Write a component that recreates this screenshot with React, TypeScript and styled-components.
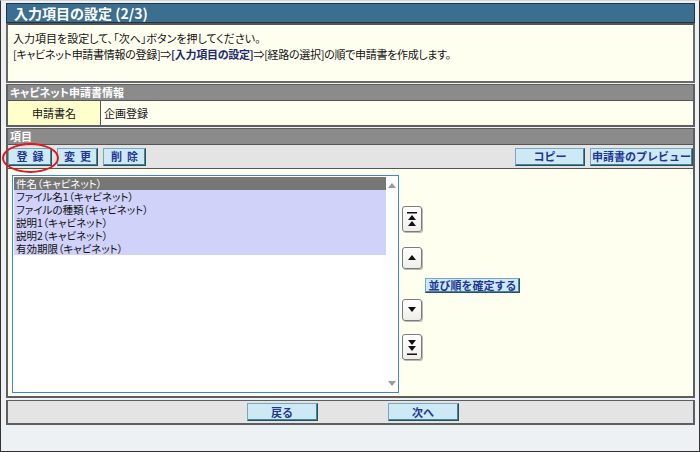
import styled, { createGlobalStyle } from "styled-components";

const GlobalStyle = createGlobalStyle`
  html, body { margin: 0; padding: 0; }
  body {
    font-family: "Noto Sans CJK JP", "Noto Sans", sans-serif;
    font-size: 11px;
    color: #111;
    background: #edf1f4;
  }
`;

const Frame = styled.div`
  box-sizing: border-box;
  width: 700px;
  height: 452px;
  border: 1px solid #333;
  border-top-color: #d4d4d4;
  padding: 2px 4px 0 5px;
  background: #edf1f4;
  display: flex;
  flex-direction: column;
`;

const TitleBar = styled.div`
  box-sizing: border-box;
  height: 20px;
  background: #3c6f8f;
  border: 1px solid #1c3649;
  color: #fff;
  font-size: 14px;
  font-weight: bold;
  line-height: 18px;
  padding-left: 7px;
`;

const InfoBox = styled.div`
  box-sizing: border-box;
  height: 60px;
  background: #fffff0;
  border: 2px solid #6a6a6a;
  border-top-color: #555;
  padding: 5px 0 0 5px;
  line-height: 16px;
  font-feature-settings: "palt";
`;

const InfoLine = styled.div<{ $tight?: boolean }>`
  letter-spacing: ${(p) => (p.$tight ? "-0.3px" : "0")};
`;

const Strong = styled.b`
  color: #1b2a70;
`;

const Section = styled.div<{ $grow?: boolean }>`
  box-sizing: border-box;
  margin-top: 1px;
  border: 2px solid #5e5e5e;
  border-top-width: 1px;
  display: flex;
  flex-direction: column;
  ${(p) => (p.$grow ? "height: 270px;" : "")}
`;

const SectionHeader = styled.div`
  height: 15px;
  background: #8b8b8b;
  border-bottom: 1px solid #555;
  color: #fff;
  font-weight: bold;
  line-height: 15px;
  padding-left: 2px;
  font-feature-settings: "palt";
`;

const InfoRow = styled.div`
  display: flex;
  height: 24px;
  background: #fffff0;
`;

const LabelCell = styled.div`
  width: 92px;
  background: #ffffcc;
  border-right: 1px solid #555;
  display: flex;
  align-items: center;
  justify-content: center;
`;

const ValueCell = styled.div`
  flex: 1;
  display: flex;
  align-items: center;
  padding-left: 3px;
`;

const Toolbar = styled.div`
  position: relative;
  height: 23px;
  background: #e4e4e4;
  border-bottom: 1px solid #555;
  display: flex;
  align-items: center;
  gap: 5px;
`;

const Spacer = styled.div`
  flex: 1;
`;

const Button = styled.button<{ $w: number; $h?: number; $spaced?: boolean }>`
  box-sizing: border-box;
  width: ${(p) => p.$w}px;
  height: ${(p) => p.$h ?? 18}px;
  padding: 0;
  background: #cde9f4;
  border: 1px solid;
  border-color: #7aa7b9 #1f5466 #1f5466 #7aa7b9;
  box-shadow: inset -1px -1px 0 #4d8294;
  color: #1e3696;
  font-family: inherit;
  font-size: 11px;
  font-weight: bold;
  line-height: 1;
  letter-spacing: ${(p) => (p.$spaced ? "5px" : "0")};
  text-indent: ${(p) => (p.$spaced ? "5px" : "0")};
  cursor: pointer;
`;

const Highlight = styled.div`
  position: absolute;
  left: -6px;
  top: -2px;
  width: 57px;
  height: 30px;
  box-sizing: border-box;
  border: 2.5px solid #e3161c;
  border-radius: 50%;
  pointer-events: none;
`;

const Content = styled.div`
  flex: 1;
  background: #fffff0;
  display: flex;
  padding: 6px 0 0 4px;
`;

const ListBox = styled.div`
  box-sizing: border-box;
  width: 387px;
  height: 218px;
  background: #fff;
  border: 1px solid #3f83e6;
  display: flex;
  padding: 1px 0 0 1px;
`;

const Items = styled.div`
  width: 372px;
`;

const Item = styled.div<{ $selected?: boolean }>`
  height: 13px;
  line-height: 13px;
  font-size: 10.5px;
  padding-left: 2px;
  white-space: nowrap;
  overflow: hidden;
  font-feature-settings: "palt";
  background: ${(p) => (p.$selected ? "#767676" : "#d0d2fa")};
  color: ${(p) => (p.$selected ? "#fff" : "#111")};
`;

const ScrollGutter = styled.div`
  flex: 1;
  display: flex;
  flex-direction: column;
  justify-content: space-between;
  align-items: center;
  padding: 6px 0 6px;
`;

const SideColumn = styled.div`
  display: flex;
  flex-direction: column;
  align-items: flex-start;
  padding: 31px 0 0 3px;
`;

const ArrowButton = styled.button<{ $h: number; $mt: number }>`
  box-sizing: border-box;
  width: 20px;
  height: ${(p) => p.$h}px;
  margin-top: ${(p) => p.$mt}px;
  padding: 0;
  background: linear-gradient(#ffffff, #eeeeea);
  border: 1px solid #7b7b7b;
  border-radius: 3px;
  box-shadow: 1px 1px 0 #b9b9b9;
  display: flex;
  align-items: center;
  justify-content: center;
  cursor: pointer;
`;

const SortButton = styled(Button)`
  margin: 9px 0 0 23px;
`;

const Footer = styled.div`
  box-sizing: border-box;
  margin-top: 2px;
  height: 25px;
  background: #e4e4e4;
  border: 2px solid #5e5e5e;
  border-top-width: 1px;
  display: flex;
  justify-content: center;
  align-items: center;
  gap: 70px;
  padding-left: 4px;
`;

function Triangle({ up, y }: { up: boolean; y: number }) {
  const pts = up ? `1,${y + 5} 9,${y + 5} 5,${y}` : `1,${y} 9,${y} 5,${y + 5}`;
  return <polygon points={pts} fill="#111" />;
}

function ArrowIcon({ kind }: { kind: "top" | "up" | "down" | "bottom" }) {
  if (kind === "up") {
    return (
      <svg width="10" height="6" viewBox="0 0 10 6">
        <Triangle up y={0} />
      </svg>
    );
  }
  if (kind === "down") {
    return (
      <svg width="10" height="6" viewBox="0 0 10 6">
        <Triangle up={false} y={0} />
      </svg>
    );
  }
  if (kind === "top") {
    return (
      <svg width="10" height="15" viewBox="0 0 10 15">
        <rect x="0" y="0" width="10" height="1.5" fill="#111" />
        <Triangle up y={3} />
        <Triangle up y={9} />
      </svg>
    );
  }
  return (
    <svg width="10" height="15" viewBox="0 0 10 15">
      <Triangle up={false} y={0} />
      <Triangle up={false} y={6} />
      <rect x="0" y="13.5" width="10" height="1.5" fill="#111" />
    </svg>
  );
}

function ScrollArrow({ up }: { up: boolean }) {
  return (
    <svg width="8" height="5" viewBox="0 0 8 5">
      <polygon points={up ? "0,5 8,5 4,0" : "0,0 8,0 4,5"} fill="#9a9a9a" />
    </svg>
  );
}

const items = [
  "件名（キャビネット）",
  "ファイル名1（キャビネット）",
  "ファイルの種類（キャビネット）",
  "説明1（キャビネット）",
  "説明2（キャビネット）",
  "有効期限（キャビネット）",
];

export default function App() {
  return (
    <>
      <GlobalStyle />
      <Frame>
        <TitleBar>入力項目の設定 (2/3)</TitleBar>
        <InfoBox>
          <InfoLine>入力項目を設定して、「次へ」ボタンを押してください。</InfoLine>
          <InfoLine $tight>
            [キャビネット申請書情報の登録]⇒<Strong>[入力項目の設定]</Strong>⇒[経路の選択]の順で申請書を作成します。
          </InfoLine>
        </InfoBox>

        <Section>
          <SectionHeader>キャビネット申請書情報</SectionHeader>
          <InfoRow>
            <LabelCell>申請書名</LabelCell>
            <ValueCell>企画登録</ValueCell>
          </InfoRow>
        </Section>

        <Section $grow>
          <SectionHeader>項目</SectionHeader>
          <Toolbar>
            <Button $w={44} $spaced>登録</Button>
            <Button $w={41} $spaced>変更</Button>
            <Button $w={43} $spaced>削除</Button>
            <Spacer />
            <Button $w={70}>コピー</Button>
            <Button $w={103}>申請書のプレビュー</Button>
            <Highlight />
          </Toolbar>
          <Content>
            <ListBox>
              <Items>
                {items.map((t, i) => (
                  <Item key={t} $selected={i === 0}>
                    {t}
                  </Item>
                ))}
              </Items>
              <ScrollGutter>
                <ScrollArrow up />
                <ScrollArrow up={false} />
              </ScrollGutter>
            </ListBox>
            <SideColumn>
              <ArrowButton $h={26} $mt={0}>
                <ArrowIcon kind="top" />
              </ArrowButton>
              <ArrowButton $h={22} $mt={15}>
                <ArrowIcon kind="up" />
              </ArrowButton>
              <SortButton $w={95} $h={15}>並び順を確定する</SortButton>
              <ArrowButton $h={22} $mt={6}>
                <ArrowIcon kind="down" />
              </ArrowButton>
              <ArrowButton $h={26} $mt={13}>
                <ArrowIcon kind="bottom" />
              </ArrowButton>
            </SideColumn>
          </Content>
        </Section>

        <Footer>
          <Button $w={71}>戻る</Button>
          <Button $w={71}>次へ</Button>
        </Footer>
      </Frame>
    </>
  );
}
